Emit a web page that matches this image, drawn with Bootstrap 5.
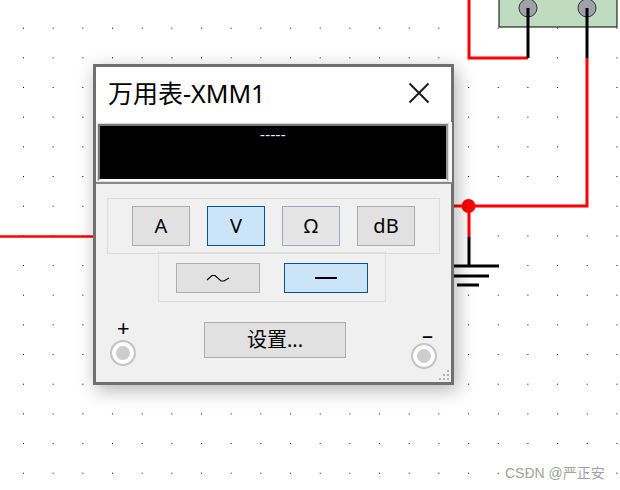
<!DOCTYPE html>
<html lang="zh">
<head>
<meta charset="utf-8">
<title>万用表-XMM1</title>
<link href="https://cdn.jsdelivr.net/npm/bootstrap@5.3.0/dist/css/bootstrap.min.css" rel="stylesheet">
<style>
html,body{margin:0;height:100%;background:#fff;overflow:hidden}
body{font-family:"Noto Sans","Noto Sans CJK SC",sans-serif;color:#000}
.canvas-area{position:absolute;left:0;top:0;width:620px;height:490px}
.meter-win{position:absolute;left:93px;top:64px;width:361px;height:321px;background:#f0f0f0;border:3px solid #707070;box-shadow:3px 5px 18px rgba(0,0,0,.3)}
.title-row{height:55px;background:#fff;padding:0 21px 4px 12px}
.title-text{font-size:25px;line-height:1;margin-top:1px}
.screen-box{height:62px;background:#f6f6f6;margin-right:-1px;padding:2px 4px 2px 2px;border-bottom:2px solid #8a8a8a}
.screen-inner{height:57px;background:#000;border:2px solid #777;border-bottom-color:#fff;border-right-color:#999;outline:1px solid #ddd;color:#fff;font-size:15px;line-height:1;text-align:center;padding-top:1px;letter-spacing:.4px}
.mode-set{width:333px;height:56px;margin:14px 0 0 11px;border:1px solid #dcdcdc;padding-top:7px;gap:17px}
.func-set{width:228px;height:50px;margin:-2px 0 0 62px;border:1px solid #dcdcdc;padding:10px 1px 0 1px;gap:24px}
.key{display:flex;align-items:center;justify-content:center;border:1px solid #adadad;background:#e1e1e1;color:#000;font-size:20px;line-height:1;padding:0;border-radius:0}
.key-wide{width:84px;height:30px}
.key-unit{width:58px;height:40px}
.key-on{background:#cce4f7;border-color:#005499}
.key-soft{background:#e5e5e5;border-color:#9aaab8}
.bottom-row{position:relative;height:60px}
.setup-key{position:absolute;left:108px;top:20px;width:142px;height:36px;font-size:20px}
.sign-mark{position:absolute;font-size:22px;line-height:1}
.sign-plus{left:21px;top:14px}
.sign-minus{left:326px;top:21px;font-size:22px}
.jack{position:absolute;width:26px;height:26px;border-radius:50%;background:#cdcdcd;border:2px solid #c4c4c4;box-shadow:inset 0 0 0 4px #fff}
.jack-left{left:14px;top:38px}
.jack-right{left:315px;top:41px}
.grip{position:absolute;right:0;bottom:0}
.stamp{position:absolute;left:505px;top:463px;font-size:14px;line-height:20px;color:#a0a0a0;font-family:"Liberation Sans","Noto Sans CJK SC",sans-serif}
</style>
</head>
<body>
<svg class="canvas-area" width="620" height="490" xmlns="http://www.w3.org/2000/svg">
  <defs>
    <pattern id="dots" x="23" y="-2" width="29.67" height="29.67" patternUnits="userSpaceOnUse">
      <rect width="1" height="1" fill="#000"/>
    </pattern>
  </defs>
  <rect width="620" height="490" fill="url(#dots)"/>
  <rect x="499" y="-3" width="118" height="30" fill="#c0dcc0" stroke="#000" stroke-width="1"/>
  <circle cx="528" cy="8" r="9" fill="#a0a0a8" stroke="#333" stroke-width="1"/>
  <circle cx="587" cy="8" r="9" fill="#a0a0a8" stroke="#333" stroke-width="1"/>
  <g fill="none" stroke-width="3">
    <path d="M469 0V58H528" stroke="#f00"/>
    <path d="M528 8V58M587 8V58" stroke="#000"/>
    <path d="M587 58V206H450" stroke="#f00"/>
    <path d="M0 236.500H95" stroke="#f00" stroke-width="2.500"/>
    <path d="M469 206V237" stroke="#f00"/>
    <path d="M469 237V266" stroke="#000"/>
    <path d="M450 266H499M450 276H489M457 285H479" stroke="#000"/>
  </g>
  <circle cx="468.500" cy="206" r="7" fill="#f00"/>
</svg>

<div class="meter-win">
  <div class="title-row d-flex align-items-center justify-content-between">
    <span class="title-text">万用表-XMM1</span>
    <svg width="22" height="22" viewBox="0 0 22 22"><path d="M1.500 1.500L20.500 20.500M20.500 1.500L1.500 20.500" stroke="#1a1a1a" stroke-width="2" fill="none"/></svg>
  </div>
  <div class="screen-box"><div class="screen-inner">-----</div></div>
  <div class="mode-set d-flex justify-content-center">
    <button class="key key-unit" type="button">A</button>
    <button class="key key-unit key-on" type="button">V</button>
    <button class="key key-unit key-soft" type="button">Ω</button>
    <button class="key key-unit" type="button">dB</button>
  </div>
  <div class="func-set d-flex justify-content-center">
    <button class="key key-wide" type="button" aria-label="交流">
      <svg width="24" height="10" viewBox="0 0 24 10"><path d="M1 7L6 2.500H9L15 8H18L23 5" stroke="#000" stroke-width="1.200" fill="none"/></svg>
    </button>
    <button class="key key-wide key-on" type="button" aria-label="直流">
      <svg width="24" height="4" viewBox="0 0 24 4"><rect x="1" y="1" width="22" height="2" fill="#000"/></svg>
    </button>
  </div>
  <div class="bottom-row">
    <span class="sign-mark sign-plus">+</span>
    <span class="jack jack-left"></span>
    <button class="key setup-key" type="button">设置...</button>
    <span class="sign-mark sign-minus">–</span>
    <span class="jack jack-right"></span>
  </div>
  <svg class="grip" width="12" height="12" viewBox="0 0 12 12" fill="#b4b4b4"><rect x="8" y="0" width="2" height="2"/><rect x="4" y="4" width="2" height="2"/><rect x="8" y="4" width="2" height="2"/><rect x="0" y="8" width="2" height="2"/><rect x="4" y="8" width="2" height="2"/><rect x="8" y="8" width="2" height="2"/></svg>
</div>
<div class="stamp">CSDN @严正安</div>
<script src="https://cdn.jsdelivr.net/npm/bootstrap@5.3.0/dist/js/bootstrap.bundle.min.js"></script>
</body>
</html>
